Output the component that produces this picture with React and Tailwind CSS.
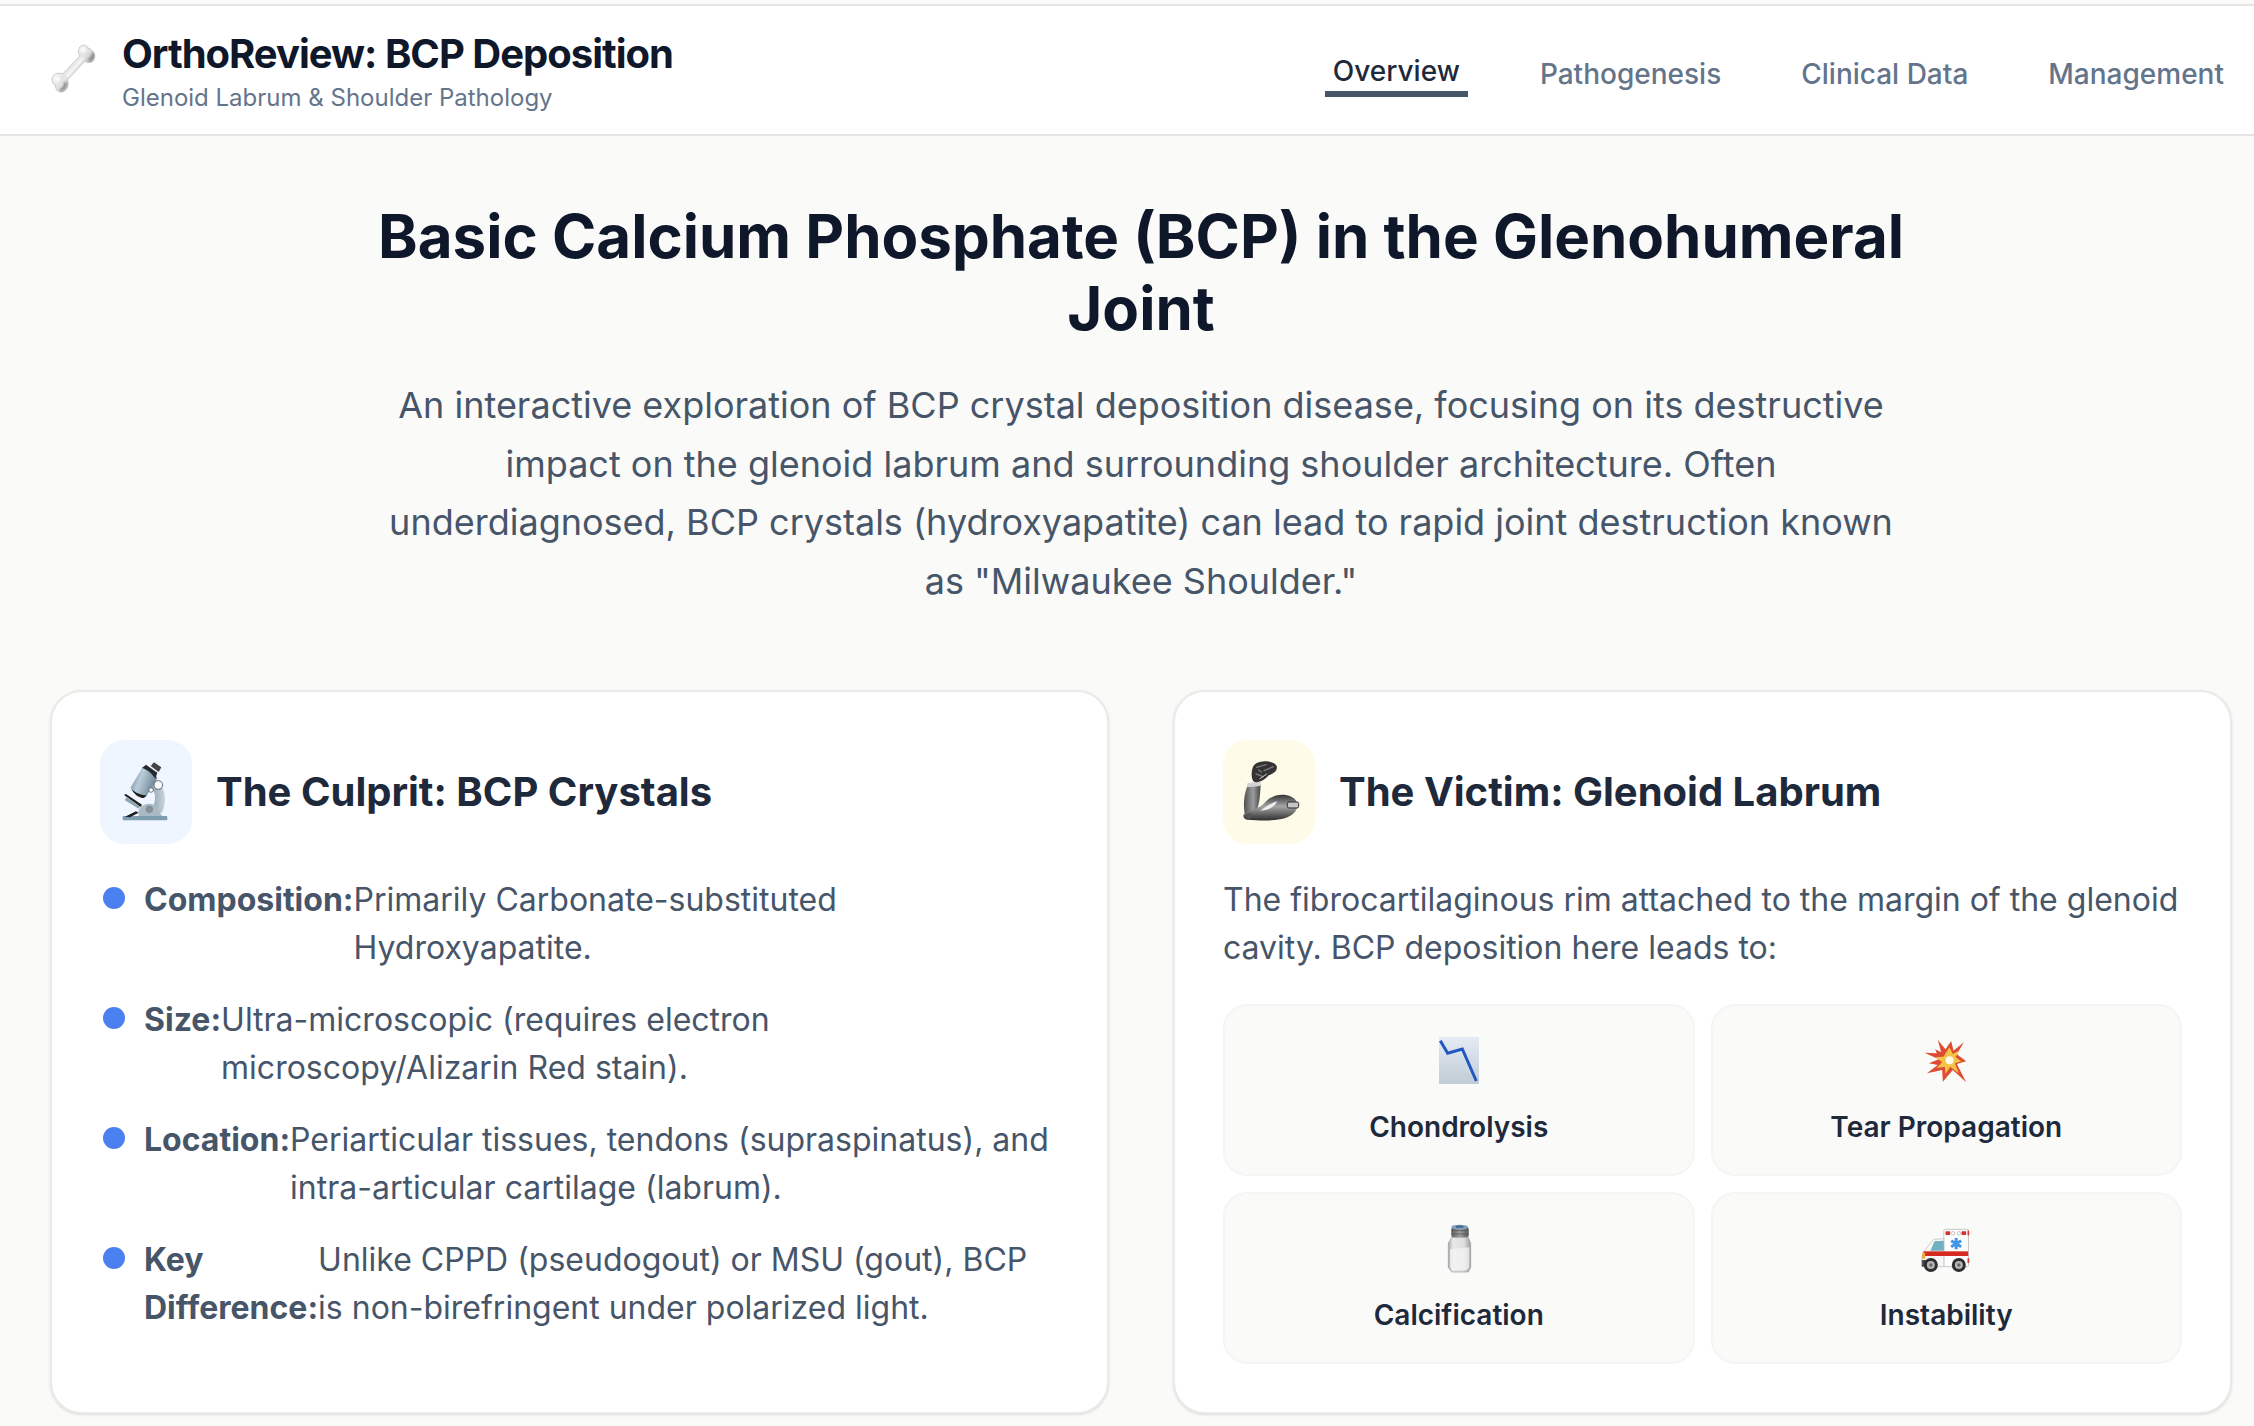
import React from "react";

const Slot = ({ w = 60, h = 60, tx, ty, children, className = "" }) => (
  <svg width={w} height={h} viewBox={`0 0 ${w} ${h}`} className={`block overflow-visible ${className}`}>
    <g transform={`translate(${tx},${ty}) scale(0.33333)`}>{children}</g>
  </svg>
);

const Bone = () => (
  <Slot tx={-16} ty={-20}>
    <defs>
      <linearGradient id="bn" gradientUnits="userSpaceOnUse" x1="105" y1="125" x2="165" y2="175">
        <stop offset="0" stopColor="#f4f4f4" />
        <stop offset="0.5" stopColor="#dedede" />
        <stop offset="1" stopColor="#8e8e8e" />
      </linearGradient>
      <filter id="bb"><feGaussianBlur stdDeviation="3" /></filter>
    </defs>
    <path
      d="M146 90 C146 76 168 68 174 84 C190 88 200 108 190 122 C182 130 170 128 164 124 L112 180 C120 196 108 218 90 216 C78 214 76 200 76 196 C64 190 62 170 76 162 C84 158 92 160 98 162 L150 108 C146 102 145 96 146 90 Z"
      fill="url(#bn)"
      stroke="#b4b4b4"
      strokeWidth="2"
    />
    <g filter="url(#bb)">
      <path d="M112 168 L158 116" stroke="#ffffff" strokeOpacity="0.8" strokeWidth="8" strokeLinecap="round" />
      <circle cx="160" cy="90" r="7" fill="#fff" />
      <circle cx="82" cy="178" r="7" fill="#fff" />
      <path d="M176 120 C186 116 190 108 188 100" stroke="#777" strokeWidth="6" fill="none" />
      <path d="M90 210 C102 208 108 196 106 186" stroke="#777" strokeWidth="6" fill="none" />
    </g>
  </Slot>
);

const Microscope = () => (
  <Slot tx={-76} ty={-82}>
    <defs>
      <linearGradient id="ms1" x1="0" y1="0" x2="1" y2="0.4">
        <stop offset="0" stopColor="#5f7f98" />
        <stop offset="0.45" stopColor="#b9ccda" />
        <stop offset="1" stopColor="#6f8393" />
      </linearGradient>
      <linearGradient id="ms2" x1="0" y1="0" x2="1" y2="0">
        <stop offset="0" stopColor="#8b9faf" />
        <stop offset="1" stopColor="#cbd6dd" />
      </linearGradient>
    </defs>
    <path d="M345 300 C378 320 382 365 366 398 L330 398 C350 370 350 335 332 322 Z" fill="url(#ms2)" />
    <path d="M296 392 C306 368 340 364 352 385 L366 408 L296 408 Z" fill="#a9bac5" />
    <circle cx="328" cy="388" r="10" fill="#8d9196" stroke="#77828b" strokeWidth="2" />
    <rect x="248" y="408" width="134" height="13" rx="3" fill="#7f9db1" />
    <path d="M252 345 L258 342 L306 374 L302 381 Z" fill="#222" />
    <path d="M260 352 L300 380 L296 386 L254 360 Z" fill="#8fa3af" />
    <path d="M255 410 L288 394 L296 398 L270 412 Z" fill="#1e1e1e" />
    <path d="M272 322 L308 262 C320 262 345 278 352 295 L318 350 C300 352 276 340 272 322 Z" fill="url(#ms1)" />
    <path d="M274 326 C288 340 306 346 320 346 L312 354 C296 354 282 342 274 326 Z" fill="#1f1f1f" />
    <path d="M306 264 L318 254 L352 278 L346 296 C336 280 320 268 306 264 Z" fill="#252a2e" />
    <path d="M332 258 L342 247 L364 262 L356 276 Z" fill="#444" />
    <circle cx="355" cy="315" r="13" fill="#fafafa" stroke="#5f6a72" strokeWidth="3" />
    <circle cx="333" cy="330" r="7" fill="#f3f3f3" stroke="#444" strokeWidth="2" />
  </Slot>
);

const MechArm = () => (
  <Slot tx={-79} ty={-82}>
    <defs>
      <linearGradient id="ar1" x1="0" y1="0" x2="1" y2="0">
        <stop offset="0" stopColor="#505050" />
        <stop offset="0.55" stopColor="#9c9c9c" />
        <stop offset="1" stopColor="#444" />
      </linearGradient>
      <linearGradient id="ar2" x1="0" y1="0" x2="0" y2="1">
        <stop offset="0" stopColor="#333" />
        <stop offset="0.45" stopColor="#a6a6a6" />
        <stop offset="1" stopColor="#2e2e2e" />
      </linearGradient>
    </defs>
    <path d="M262 318 L302 314 C300 350 298 375 288 395 L256 410 C248 375 252 345 262 318 Z" fill="url(#ar1)" />
    <path d="M262 310 L302 304 L301 318 L262 322 Z" fill="#d2d2d2" />
    <path d="M252 402 C270 390 300 386 320 362 C345 338 395 338 410 365 C420 385 400 412 360 418 C320 424 290 420 262 419 C250 418 248 408 252 402 Z" fill="url(#ar2)" />
    <path d="M300 392 C320 380 335 368 352 364 C342 382 325 392 300 392 Z" fill="#efefef" />
    <rect x="382" y="366" width="34" height="18" rx="5" fill="#c6c6c6" stroke="#2c2c2c" strokeWidth="3" />
    <circle cx="267" cy="408" r="8" fill="#555" />
    <path d="M282 256 C296 238 340 240 350 258 C354 272 340 282 326 286 C316 300 292 312 280 304 C272 290 274 268 282 256 Z" fill="#333" />
    <path d="M290 262 L318 254 M312 272 L340 260 M288 282 L310 290 M296 270 L304 276" stroke="#7c7c7c" strokeWidth="4" strokeLinecap="round" />
    <path d="M300 296 L320 282" stroke="#c2c2c2" strokeWidth="3" strokeLinecap="round" />
  </Slot>
);

const Chart = () => (
  <svg width="60" height="60" viewBox="0 0 60 60" className="block overflow-visible">
    <defs>
      <linearGradient id="ch" x1="0" y1="0" x2="0" y2="1">
        <stop offset="0" stopColor="#e4ebf3" />
        <stop offset="1" stopColor="#c1ccd6" />
      </linearGradient>
    </defs>
    <rect x="10" y="5" width="40" height="47" fill="url(#ch)" />
    <path d="M11.3 8.7 L18.7 21.3 L33.3 17 L47.3 49" fill="none" stroke="#1f57c3" strokeWidth="3" strokeLinejoin="miter" />
  </svg>
);

const Collision = () => (
  <Slot tx={-16.5} ty={-12}>
    <path
      d="M115 60 L138 88 L155 63 L162 92 L193 67 L172 103 L200 124 L172 132 L200 187 L160 150 L130 185 L128 150 L82 160 L115 135 L88 130 L118 118 L75 98 L112 100 L107 88 L125 97 Z"
      fill="#de4d33"
    />
    <path d="M150 82 L160 102 L178 92 L168 112 L186 124 L166 130 L178 160 L152 140 L138 162 L136 140 L112 144 L128 126 L108 112 L132 110 Z" fill="#f4c548" />
    <circle cx="150" cy="121" r="12" fill="#fffbe6" />
  </Slot>
);

const Salt = () => (
  <Slot tx={-29} ty={-10}>
    <defs>
      <linearGradient id="sl" x1="0" y1="0" x2="1" y2="0">
        <stop offset="0" stopColor="#a8a8a8" />
        <stop offset="0.2" stopColor="#e8e8e8" />
        <stop offset="0.7" stopColor="#dedede" />
        <stop offset="1" stopColor="#9c9c9c" />
      </linearGradient>
      <linearGradient id="sc" x1="0" y1="0" x2="1" y2="0">
        <stop offset="0" stopColor="#5e5e5e" />
        <stop offset="0.5" stopColor="#a0a0a0" />
        <stop offset="1" stopColor="#585858" />
      </linearGradient>
    </defs>
    <path d="M155 82 L205 82 L212 100 L212 172 L205 186 L155 186 L145 172 L145 100 Z" fill="url(#sl)" stroke="#9a9a9a" strokeWidth="2" />
    <path d="M150 118 L208 112 L208 172 L200 180 L158 180 L150 172 Z" fill="#f4f4f4" opacity="0.75" />
    <rect x="154" y="52" width="52" height="30" rx="6" fill="url(#sc)" />
    <path d="M155 62 H205 M155 72 H205" stroke="#4f4f4f" strokeWidth="2" />
    <ellipse cx="179" cy="51" rx="25" ry="7" fill="#84a0bc" />
    <ellipse cx="179" cy="50" rx="12" ry="3.5" fill="#3f6694" />
  </Slot>
);

const Ambulance = () => (
  <Slot tx={-16.5} ty={-10}>
    <rect x="133" y="58" width="74" height="112" rx="4" fill="#fdfdfd" stroke="#bdbdbd" strokeWidth="2.5" />
    <path d="M133 86 L102 88 C90 100 82 115 72 126 L67 140 L67 170 L133 170 Z" fill="#f6f6f6" stroke="#bdbdbd" strokeWidth="2" />
    <path d="M133 92 L105 94 L93 122 L133 122 Z" fill="#6fb0c2" />
    <rect x="72" y="124" width="134" height="14" fill="#d42a20" />
    <rect x="67" y="150" width="24" height="20" fill="#4a4a4a" />
    <rect x="68" y="128" width="9" height="18" rx="2" fill="#eca63c" />
    <rect x="138" y="64" width="14" height="11" rx="2" fill="#d4342a" />
    <rect x="186" y="64" width="14" height="11" rx="2" fill="#d4342a" />
    <circle cx="160" cy="70" r="5.5" fill="#fff" stroke="#aaa" strokeWidth="2" />
    <circle cx="178" cy="70" r="5.5" fill="#fff" stroke="#aaa" strokeWidth="2" />
    <rect x="204" y="62" width="5" height="14" fill="#d4342a" />
    <rect x="204" y="145" width="5" height="14" fill="#d4342a" />
    <path d="M170 84 V118 M155 92 L185 110 M185 92 L155 110" stroke="#3f95e6" strokeWidth="9" />
    {[94, 178].map((x) => (
      <g key={x}>
        <circle cx={x} cy="165" r="21" fill="#2e2e2e" />
        <circle cx={x} cy="165" r="12" fill="#b5b5b5" />
        <circle cx={x} cy="165" r="5" fill="#666" />
      </g>
    ))}
  </Slot>
);

const bullets = [
  ["Composition:", "Primarily Carbonate-substituted Hydroxyapatite."],
  ["Size:", "Ultra-microscopic (requires electron microscopy/Alizarin Red stain)."],
  ["Location:", "Periarticular tissues, tendons (supraspinatus), and intra-articular cartilage (labrum)."],
  ["Key Difference:", "Unlike CPPD (pseudogout) or MSU (gout), BCP is non-birefringent under polarized light."],
];

const tiles = [
  [<Chart />, "Chondrolysis"],
  [<Collision />, "Tear Propagation"],
  [<Salt />, "Calcification"],
  [<Ambulance />, "Instability"],
];

const CardHead = ({ bg, icon, title }) => (
  <div className="flex items-center gap-6 mb-8">
    <div className={`w-[92px] h-[104px] rounded-3xl flex items-center justify-center shrink-0 ${bg}`}>{icon}</div>
    <h3 className="text-[40px] leading-[56px] font-bold text-[#1e293b]">{title}</h3>
  </div>
);

export default function App() {
  return (
    <div className="h-[1426px] overflow-hidden bg-[#fafaf9] pt-1 font-['Inter',sans-serif]">
      <header className="h-[132px] bg-white border-t-2 border-b-2 border-[#e5e5e5] flex items-center justify-between pl-[46px] pr-[22px]">
        <div className="flex items-center gap-4">
          <Bone />
          <div>
            <div className="text-[40px] leading-[56px] font-bold tracking-[-1px] text-[#0f172a]">OrthoReview: BCP Deposition</div>
            <div className="text-2xl leading-8 text-[#64748b]">Glenoid Labrum &amp; Shoulder Pathology</div>
          </div>
        </div>
        <nav className="flex items-center gap-16 mt-2 text-[28px] leading-10 font-medium text-[#64748b]">
          <span className="px-2 text-[#1e293b] border-b-[6px] border-[#475569]">Overview</span>
          <span className="px-2">Pathogenesis</span>
          <span className="px-2">Clinical Data</span>
          <span className="px-2">Management</span>
        </nav>
      </header>

      <main className="pl-[50px] pr-[22px] pt-16">
        <section className="mx-auto max-w-[1536px] text-center mb-20">
          <h1 className="text-[60px] leading-[72px] font-bold text-[#0f172a] mb-8">
            Basic Calcium Phosphate (BCP) in the Glenohumeral Joint
          </h1>
          <p className="text-[36px] leading-[58.5px] text-[#475569]">
            An interactive exploration of BCP crystal deposition disease, focusing on its destructive impact on the glenoid labrum and surrounding shoulder architecture. Often underdiagnosed, BCP crystals (hydroxyapatite) can lead to rapid joint destruction known as "Milwaukee Shoulder."
          </p>
        </section>

        <section className="grid grid-cols-2 gap-16">
          <div className="bg-white border-2 border-[#ebeae8] rounded-[32px] shadow-sm p-12">
            <CardHead bg="bg-[#eff6ff]" icon={<Microscope />} title="The Culprit: BCP Crystals" />
            <ul className="flex flex-col gap-6 text-[32px] leading-12 text-[#475569]">
              {bullets.map(([k, v]) => (
                <li key={k} className="flex items-start">
                  <span className="w-[22px] h-[22px] rounded-full bg-[#4b80f0] shrink-0 mt-[11px] ml-[3px] mr-[19px]" />
                  <strong className="font-bold">{k}</strong>
                  <span>{v}</span>
                </li>
              ))}
            </ul>
          </div>

          <div className="bg-white border-2 border-[#ebeae8] rounded-[32px] shadow-sm p-12">
            <CardHead bg="bg-[#fefce8]" icon={<MechArm />} title="The Victim: Glenoid Labrum" />
            <p className="text-[32px] leading-12 text-[#475569] mb-8">
              The fibrocartilaginous rim attached to the margin of the glenoid cavity. BCP deposition here leads to:
            </p>
            <div className="grid grid-cols-2 gap-4">
              {tiles.map(([icon, label]) => (
                <div key={label} className="bg-[#fafaf9] border-2 border-[#f5f5f4] rounded-3xl pt-6 pb-[27px] px-6 flex flex-col items-center">
                  <div className="h-16 mb-[13px] flex items-center justify-center">{icon}</div>
                  <div className="text-[28px] leading-10 font-semibold text-[#1e293b]">{label}</div>
                </div>
              ))}
            </div>
          </div>
        </section>
      </main>
    </div>
  );
}
